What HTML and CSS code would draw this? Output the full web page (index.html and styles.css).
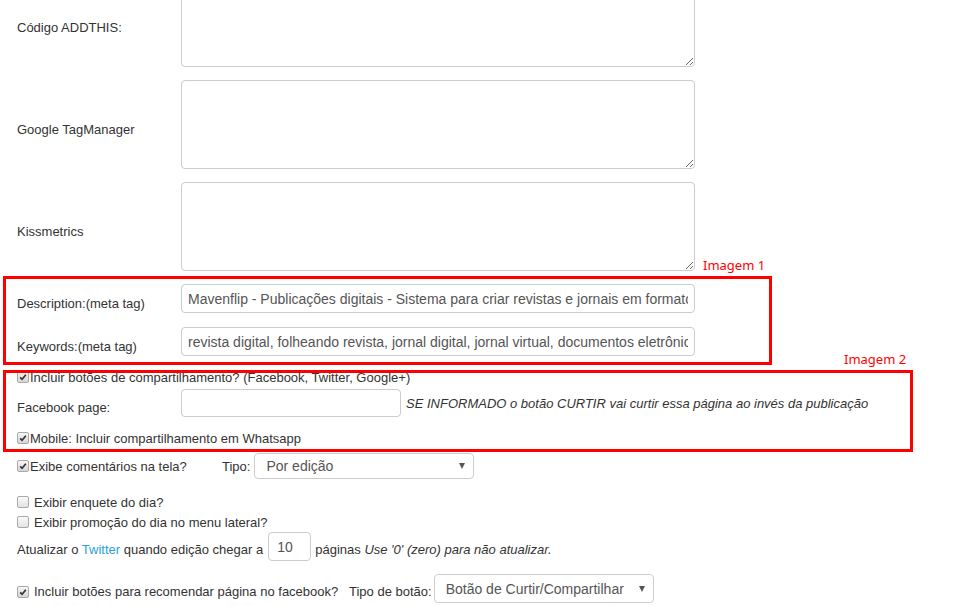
FILE: index.html
```html
<!DOCTYPE html>
<html lang="pt-BR">
<head>
    <meta charset="UTF-8">
    <title>Configurações da publicação</title>
    <link rel="stylesheet" href="styles.css">
</head>
<body>
    <div class="page">
        <form class="settings">
            <div class="row row-area">
                <label class="lbl">Código ADDTHIS:</label>
                <textarea class="area"></textarea>
            </div>
            <div class="row row-area">
                <label class="lbl">Google TagManager</label>
                <textarea class="area"></textarea>
            </div>
            <div class="row row-area">
                <label class="lbl">Kissmetrics</label>
                <textarea class="area"></textarea>
            </div>
            <div class="row row-input">
                <label class="lbl">Description:(meta tag)</label>
                <input type="text" class="text wide" value="Mavenflip - Publicações digitais - Sistema para criar revistas e jornais em formato digital">
            </div>
            <div class="row row-input">
                <label class="lbl">Keywords:(meta tag)</label>
                <input type="text" class="text wide" value="revista digital, folheando revista, jornal digital, jornal virtual, documentos eletrônicos">
            </div>

            <div class="row row-check r-share">
                <span class="check"><svg viewBox="0 0 12 12"><path d="M2.6 6.4 L4.9 8.8 L9.4 3.2"/></svg></span>
                <span>Incluir botões de compartilhamento? (Facebook, Twitter, Google+)</span>
            </div>
            <div class="row r-fb">
                <label class="lbl">Facebook page:</label>
                <input type="text" class="text fb">
                <em class="hint">SE INFORMADO o botão CURTIR vai curtir essa página ao invés da publicação</em>
            </div>
            <div class="row row-check r-mobile">
                <span class="check"><svg viewBox="0 0 12 12"><path d="M2.6 6.4 L4.9 8.8 L9.4 3.2"/></svg></span>
                <span>Mobile: Incluir compartilhamento em Whatsapp</span>
            </div>

            <div class="row r-comments">
                <span class="check"><svg viewBox="0 0 12 12"><path d="M2.6 6.4 L4.9 8.8 L9.4 3.2"/></svg></span>
                <span class="comments-lbl">Exibe comentários na tela?</span>
                <span>Tipo:</span>
                <div class="select select-type">
                    <span>Por edição</span>
                    <i class="caret"></i>
                </div>
            </div>
            <div class="row row-check r-poll">
                <span class="check off"></span>
                <span>Exibir enquete do dia?</span>
            </div>
            <div class="row row-check r-promo">
                <span class="check off"></span>
                <span>Exibir promoção do dia no menu lateral?</span>
            </div>
            <div class="row r-twitter">
                <span class="low">Atualizar o <a href="#" class="link">Twitter</a> quando edição chegar a</span>
                <input type="text" class="text pages" value="10">
                <span class="low">páginas <em>Use '0' (zero) para não atualizar.</em></span>
            </div>
            <div class="row r-like">
                <span class="check low"><svg viewBox="0 0 12 12"><path d="M2.6 6.4 L4.9 8.8 L9.4 3.2"/></svg></span>
                <span class="low like-lbl">Incluir botões para recomendar página no facebook?</span>
                <span class="low">Tipo de botão:</span>
                <div class="select select-btn">
                    <span>Botão de Curtir/Compartilhar</span>
                    <i class="caret"></i>
                </div>
            </div>
        </form>

        <!-- marcações do print -->
        <div class="mark mark-1"></div>
        <span class="mark-tag tag-1">Imagem 1</span>
        <div class="mark mark-2"></div>
        <span class="mark-tag tag-2">Imagem 2</span>
    </div>
</body>
</html>
```

FILE: styles.css
```css
body {
    margin: 0;
    font-family: 'Liberation Sans', Arial, sans-serif;
    font-size: 13px;
    color: #333;
    background-color: #fff;
}

.page {
    position: relative;
    height: 606px;
    overflow: hidden;
}

.settings {
    margin-top: -22px;
    padding-left: 17px;
}

.row {
    display: flex;
    align-items: center;
}

.lbl {
    width: 164px;
    flex: none;
    padding-top: 9px; /* texto um pouco abaixo do centro */
}

.row-area {
    height: 89px;
    margin-bottom: 13px;
}

.area {
    width: 514px;
    height: 89px;
    box-sizing: border-box;
    margin: 0;
    border: 1px solid #ccc;
    border-radius: 4px;
}

.row-input {
    height: 29px;
    margin-bottom: 14px;
}

.text {
    box-sizing: border-box;
    height: 29px;
    margin: 0;
    padding: 0 6px;
    border: 1px solid #ccc;
    border-radius: 4px;
    font-family: 'Liberation Sans', Arial, sans-serif;
    font-size: 14px;
    color: #555;
    outline: none;
}

.wide {
    width: 514px;
}

/* checkboxes */
.row-check {
    height: 14px;
}

.check {
    flex: none;
    width: 12px;
    height: 12px;
    box-sizing: border-box;
    margin-right: 1px;
    border: 1px solid #a9a9a9;
    border-radius: 2px;
    background: linear-gradient(#f6f6f6, #d6d6d6);
}

.check svg {
    display: block;
    width: 10px;
    height: 10px;
}

.check path {
    fill: none;
    stroke: #333;
    stroke-width: 2;
}

.check.off {
    margin-right: 5px;
    background: linear-gradient(#fafafa, #e2e2e2);
}

.r-share {
    margin-bottom: 5px;
}

.r-fb {
    height: 28px;
    margin-bottom: 14px;
}

.r-fb .lbl {
    padding-top: 8px;
}

.fb {
    width: 220px;
    height: 28px;
}

.hint {
    margin-left: 5px;
}

.r-mobile {
    margin-bottom: 8px;
}

.r-comments {
    height: 26px;
    margin-bottom: 16px;
}

.comments-lbl {
    width: 192px;
    flex: none;
}

.select {
    display: flex;
    align-items: center;
    justify-content: space-between;
    box-sizing: border-box;
    padding: 0 8px 0 11px;
    border: 1px solid #ccc;
    border-radius: 4px;
    font-size: 14px;
    color: #555;
}

.caret {
    width: 0;
    height: 0;
    border-left: 3.5px solid transparent;
    border-right: 3.5px solid transparent;
    border-top: 6px solid #555;
}

.select-type {
    width: 220px;
    height: 26px;
    margin-left: 4px;
}

.r-poll {
    margin-bottom: 6px;
}

.r-promo {
    margin-bottom: 3px;
}

.r-twitter {
    height: 29px;
    margin-bottom: 13px;
}

.low {
    padding-top: 5px;
}

.link {
    color: #2a9fd8;
    text-decoration: none;
}

.pages {
    width: 43px;
    margin: 0 4px 0 5px;
    padding-left: 8px;
}

.r-like {
    height: 29px;
}

.r-like .check.low {
    padding-top: 0;
    margin-top: 6px;
    margin-right: 5px;
}

.like-lbl {
    width: 315px;
    flex: none;
}

.select-btn {
    width: 220px;
    height: 29px;
    margin-left: 2px;
}

/* marcações vermelhas por cima */
.mark {
    position: absolute;
    box-sizing: border-box;
    border: 3px solid #f00;
}

.mark-1 {
    left: 3px;
    top: 276px;
    width: 769px;
    height: 89px;
}

.mark-2 {
    left: 3px;
    top: 370px;
    width: 910px;
    height: 82px;
}

.mark-tag {
    position: absolute;
    font-family: 'Noto Sans', sans-serif;
    font-size: 13px;
    line-height: 16px;
    color: #f00;
}

.tag-1 {
    left: 703px;
    top: 257px;
}

.tag-2 {
    left: 844px;
    top: 351px;
}
```
